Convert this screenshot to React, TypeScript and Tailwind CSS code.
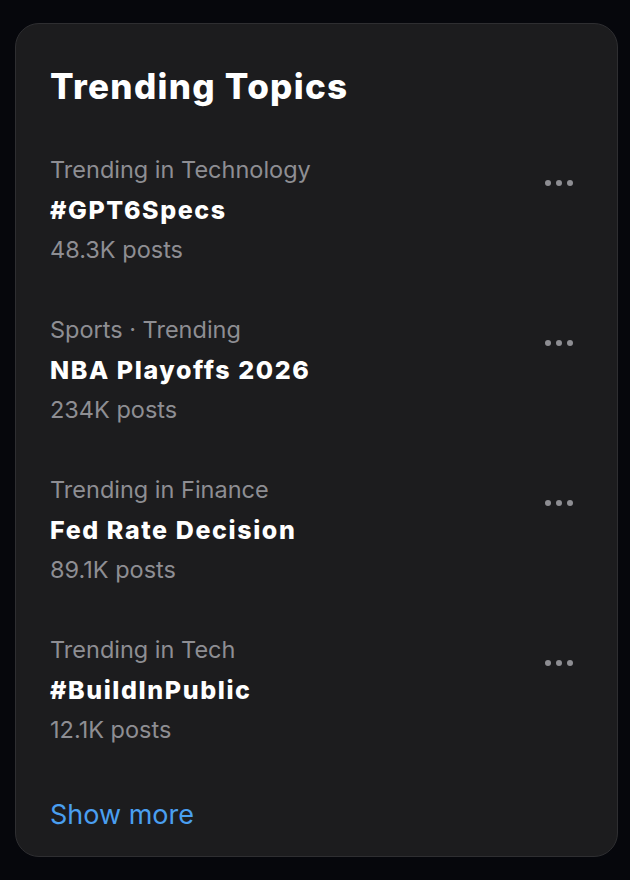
const TOPICS = [
  { category: 'Trending in Technology', title: '#GPT6Specs', posts: '48.3K posts' },
  { category: 'Sports · Trending', title: 'NBA Playoffs 2026', posts: '234K posts' },
  { category: 'Trending in Finance', title: 'Fed Rate Decision', posts: '89.1K posts' },
  { category: 'Trending in Tech', title: '#BuildInPublic', posts: '12.1K posts' },
];

function Dots() {
  return (
    <div className="mr-[10px] flex items-center gap-[5px] pt-[30px]">
      <span className="h-[6px] w-[6px] rounded-full bg-[#8e8e93]" />
      <span className="h-[6px] w-[6px] rounded-full bg-[#8e8e93]" />
      <span className="h-[6px] w-[6px] rounded-full bg-[#8e8e93]" />
    </div>
  );
}

export default function App() {
  return (
    <div
      className="min-h-[880px] bg-[#06070c] pl-[15px] pr-[12px] pt-[23px]"
      style={{ fontFamily: 'Inter, "Noto Sans", sans-serif' }}
    >
      <div className="h-[834px] rounded-[24px] border border-[#2e2e31] bg-[#1c1c1e] px-[34px] pt-[42px]">
        <h2 className="text-[35px] font-extrabold leading-[40px] tracking-[1.3px] text-white">Trending Topics</h2>

        <div className="mt-[44px] flex flex-col gap-[40px]">
          {TOPICS.map(t => (
            <div key={t.title} className="flex items-start justify-between">
              <div className="flex flex-col">
                <span className="text-[23.5px] leading-[40px] text-[#8e8e93]">{t.category}</span>
                <span className="text-[25px] font-extrabold leading-[40px] tracking-[1.6px] text-white">{t.title}</span>
                <span className="text-[23.5px] leading-[40px] text-[#8e8e93]">{t.posts}</span>
              </div>
              <Dots />
            </div>
          ))}
        </div>

        <button className="mt-[47px] text-[27px] leading-[36px] text-[#4a9ff0]">Show more</button>
      </div>
    </div>
  );
}
